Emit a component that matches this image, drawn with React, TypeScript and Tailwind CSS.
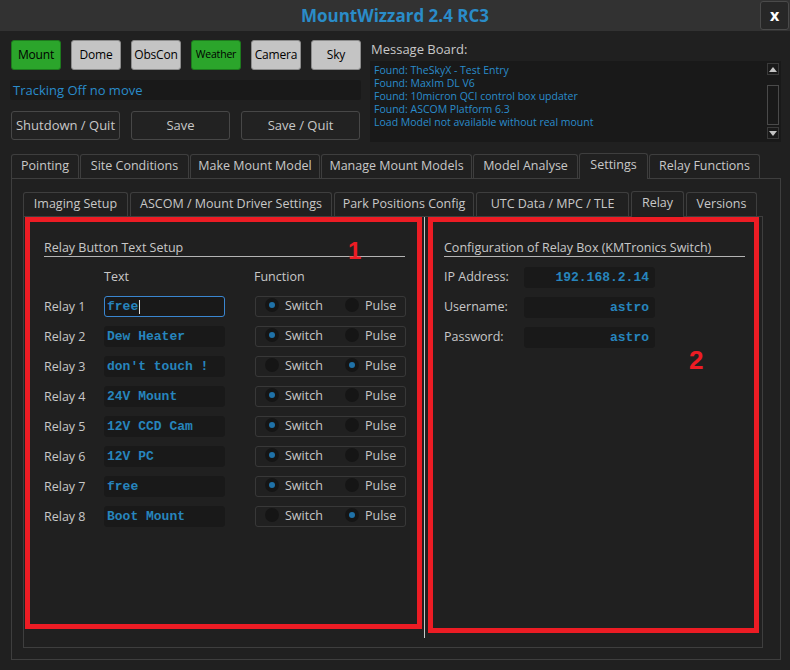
import React from 'react';

const relays: [string, 'switch' | 'pulse'][] = [
  ['free', 'switch'],
  ['Dew Heater', 'switch'],
  ["don't touch !", 'pulse'],
  ['24V Mount', 'switch'],
  ['12V CCD Cam', 'switch'],
  ['12V PC', 'switch'],
  ['free', 'switch'],
  ['Boot Mount', 'pulse'],
];

const messages = [
  'Found: TheSkyX - Test Entry',
  'Found: MaxIm DL V6',
  'Found: 10micron QCI control box updater',
  'Found: ASCOM Platform 6.3',
  'Load Model not available without real mount',
];

const TopButton = ({ label, green, small }: { label: string; green?: boolean; small?: boolean }) => (
  <div
    className={`w-[50px] h-[30px] rounded-[3px] border flex items-center justify-center text-black tracking-[-0.2px] ${
      green ? 'bg-[#2ba52b] border-[#1d7a1d]' : 'bg-[#c4c4c4] border-[#8c8c8c]'
    } ${small ? 'text-[10.5px]' : 'text-[12px]'}`}
  >
    {label}
  </div>
);

const ActionButton = ({ label, w }: { label: string; w: string }) => (
  <div className={`${w} h-[29px] rounded-[3px] border border-[#474747] bg-[#222222] flex items-center justify-center text-[13px] text-[#c8c8c8]`}>
    {label}
  </div>
);

const Tab = ({ label, w, active }: { label: string; w: string; active?: boolean }) => (
  <div
    className={`${w} ${
      active ? 'h-[26px] -mb-px bg-[#202020] relative z-10 pb-[2px]' : 'h-[24px]'
    } border border-b-0 border-[#3e3e3e] rounded-t-[3px] flex items-center justify-center text-[12.5px] text-[#c8c8c8] whitespace-nowrap`}
  >
    {label}
  </div>
);

const Radio = ({ on, label }: { on: boolean; label: string }) => (
  <div className="flex items-center">
    <div className="w-[14px] h-[14px] rounded-full bg-[#151515] flex items-center justify-center -mt-[3px]">
      {on && <div className="w-[6px] h-[6px] rounded-full bg-[#1f72a8]" />}
    </div>
    <span className="ml-[6px] text-[#c8c8c8]">{label}</span>
  </div>
);

const MonoInput = ({ value, w, right, focus }: { value: string; w: string; right?: boolean; focus?: boolean }) => (
  <div
    className={`${w} h-[21px] rounded-[3px] border ${
      focus ? 'border-[#3a86d0]' : 'border-[#191919]'
    } bg-[#191919] flex items-center ${right ? 'justify-end pr-[5px]' : 'pl-[2px]'} font-['Liberation_Mono',monospace] font-bold text-[13px] text-[#2785bd] whitespace-pre`}
  >
    {value}
    {focus && <span className="w-px h-[14px] bg-[#e0e0e0] ml-px" />}
  </div>
);

const ScrollArrow = ({ up }: { up?: boolean }) => (
  <div className="w-[12px] h-[12px] border border-[#3a3a3a] flex items-center justify-center">
    <svg width="8" height="5" viewBox="0 0 8 5">
      <polygon points={up ? '0,5 8,5 4,0' : '0,0 8,0 4,5'} fill="#c4c4c4" />
    </svg>
  </div>
);

export default function App() {
  return (
    <div className="w-[790px] h-[670px] bg-[#202020] flex flex-col font-['Open_Sans',sans-serif] text-[12.5px] text-[#c8c8c8] overflow-hidden">
      {/* title bar */}
      <div className="h-[31px] bg-[#323232] flex items-center justify-center relative shrink-0">
        <span className="text-[17px] font-bold text-[#2a8cc8]">MountWizzard 2.4 RC3</span>
        <div className="absolute right-[1px] top-[1px] w-[29px] h-[29px] rounded-[3px] border border-[#4a4a4a] bg-[#272727] flex items-center justify-center text-white font-bold text-[16px] pb-[2px]">
          x
        </div>
      </div>

      {/* top area */}
      <div className="flex pl-[10px] pt-[9px] shrink-0">
        <div className="w-[351px] flex flex-col">
          <div className="flex gap-[10px] pl-px">
            <TopButton label="Mount" green />
            <TopButton label="Dome" />
            <TopButton label="ObsCon" />
            <TopButton label="Weather" green small />
            <TopButton label="Camera" />
            <TopButton label="Sky" />
          </div>
          <div className="mt-[10px] h-[20px] rounded-[2px] bg-[#191919] flex items-center pl-[3px] pt-[2px] text-[13px] text-[#2a8ccb]">
            Tracking Off no move
          </div>
          <div className="mt-[11px] flex gap-[11px] pl-px">
            <ActionButton label="Shutdown / Quit" w="w-[109px]" />
            <ActionButton label="Save" w="w-[99px]" />
            <ActionButton label="Save / Quit" w="w-[119px]" />
          </div>
        </div>
        <div className="ml-[9px] w-[411px] flex flex-col">
          <div className="h-[19px] flex items-center pl-px text-[13px] text-[#c8c8c8]">Message Board:</div>
          <div className="mt-[2px] h-[81px] bg-[#191919] flex">
            <div className="flex-1 pl-[4px] pt-[3px] text-[10.5px] leading-[13px] text-[#2a8ccb]">
              {messages.map((m) => (
                <div key={m}>{m}</div>
              ))}
            </div>
            <div className="w-[14px] flex flex-col pt-[2px] pb-[3px] pr-[1px]">
              <ScrollArrow up />
              <div className="mt-[10px] h-[40px] w-[12px] border border-[#4a4a4a]" />
              <div className="mt-auto">
                <ScrollArrow />
              </div>
            </div>
          </div>
        </div>
      </div>

      {/* main tabs */}
      <div className="mt-[10px] ml-[11px] flex items-end gap-px h-[26px] shrink-0">
        <Tab label="Pointing" w="w-[68px]" />
        <Tab label="Site Conditions" w="w-[109px]" />
        <Tab label="Make Mount Model" w="w-[130px]" />
        <Tab label="Manage Mount Models" w="w-[151px]" />
        <Tab label="Model Analyse" w="w-[105px]" />
        <Tab label="Settings" w="w-[69px]" active />
        <Tab label="Relay Functions" w="w-[111px]" />
      </div>
      <div className="ml-[11px] w-[770px] h-[482px] border border-[#3e3e3e] pl-[11px] pt-[11px] shrink-0">
        <div className="flex items-end gap-[2px] h-[26px]">
          <Tab label="Imaging Setup" w="w-[105px]" />
          <Tab label="ASCOM / Mount Driver Settings" w="w-[202px]" />
          <Tab label="Park Positions Config" w="w-[140px]" />
          <Tab label="UTC Data / MPC / TLE" w="w-[153px]" />
          <Tab label="Relay" w="w-[53px]" active />
          <Tab label="Versions" w="w-[71px]" />
        </div>
        <div className="w-[740px] h-[432px] border border-[#3e3e3e] pl-px flex items-start">
          {/* relay button text setup */}
          <div className="relative w-[397px] h-[412px] border-[5px] border-[#ed1c24] pl-[14px] pt-[18px]">
            <div className="w-[361px] h-[17px] border-b border-[#b4b4b4] leading-[16px]">Relay Button Text Setup</div>
            <div className="absolute left-[318px] top-[16px] text-[24px] leading-[26px] font-bold text-[#ed1c24] font-['Liberation_Sans',sans-serif]">
              1
            </div>
            <div className="flex mt-[12px] h-[16px] items-center">
              <span className="w-[60px]" />
              <span className="w-[150px]">Text</span>
              <span>Function</span>
            </div>
            <div className="mt-[11px] flex flex-col gap-[9px]">
              {relays.map(([text, mode], i) => (
                <div key={i} className="flex items-center h-[21px]">
                  <span className="w-[60px] pt-[1px]">Relay {i + 1}</span>
                  <MonoInput value={text} w="w-[121px]" focus={i === 0} />
                  <div className="ml-[30px] w-[151px] h-[21px] border border-[#383838] rounded-[3px] flex items-center pl-[9px]">
                    <div className="w-[80px]">
                      <Radio on={mode === 'switch'} label="Switch" />
                    </div>
                    <Radio on={mode === 'pulse'} label="Pulse" />
                  </div>
                </div>
              ))}
            </div>
          </div>

          <div className="ml-[2px] mt-0 w-px h-[421px] bg-[#c8c8c8]" />

          {/* relay box config */}
          <div className="relative ml-[3px] w-[331px] h-[416px] border-[5px] border-[#ed1c24] pl-[11px] pt-[18px]">
            <div className="w-[301px] h-[17px] border-b border-[#b4b4b4] leading-[16px]">Configuration of Relay Box (KMTronics Switch)</div>
            <div className="mt-[10px] flex flex-col gap-[9px]">
              {[
                ['IP Address:', '192.168.2.14'],
                ['Username:', 'astro'],
                ['Password:', 'astro'],
              ].map(([label, value]) => (
                <div key={label} className="flex items-center h-[21px]">
                  <span className="w-[80px]">{label}</span>
                  <MonoInput value={value} w="w-[131px]" right />
                </div>
              ))}
            </div>
            <div className="absolute left-[256px] top-[123px] text-[26px] leading-[30px] font-bold text-[#ed1c24] font-['Liberation_Sans',sans-serif]">
              2
            </div>
          </div>
        </div>
      </div>
    </div>
  );
}
